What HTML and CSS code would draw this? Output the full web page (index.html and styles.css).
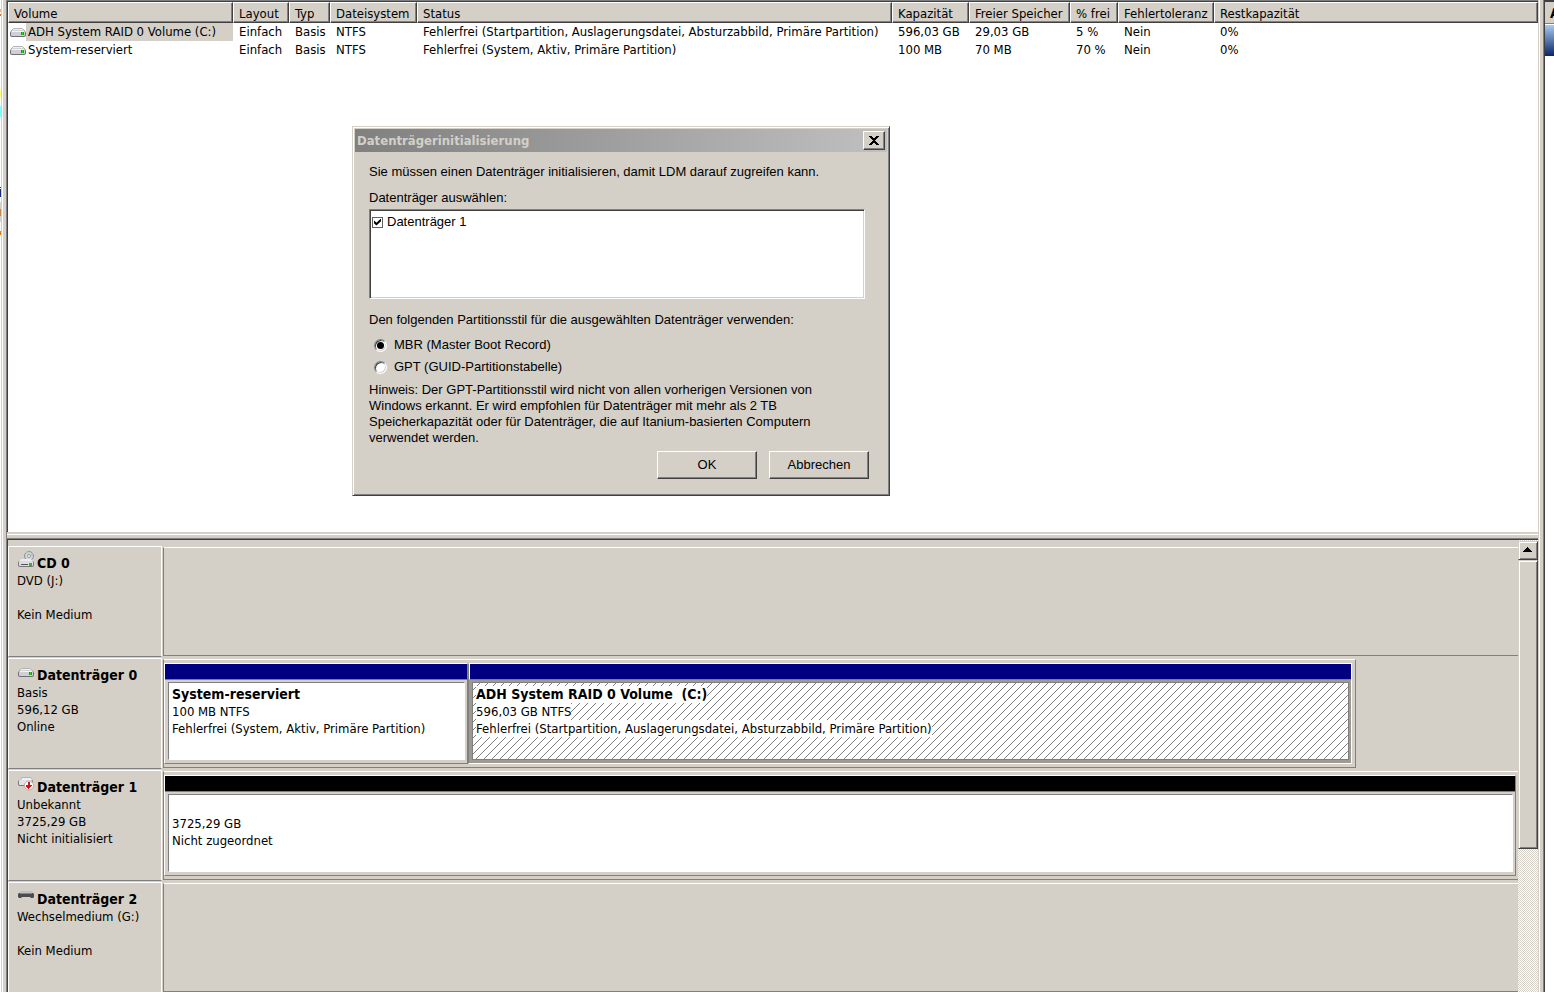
FILE: index.html
```html
<!DOCTYPE html>
<html lang="de">
<head>
  <meta charset="UTF-8">
  <meta name="viewport" content="width=device-width, initial-scale=1.0">
  <title>Datenträgerverwaltung</title>
  <link rel="stylesheet" href="styles.css">
</head>
<body>
  <!-- Symbole -->
  <svg class="symbols" width="0" height="0">
    <symbol id="icon-volume" viewBox="0 0 16 10">
      <path d="M3.500 1.500h9L15 4H1z" fill="#f0f0f2" stroke="#b4b4b8"/>
      <rect x="0" y="4" width="16" height="6" rx="2" fill="#6e6e74"/>
      <rect x="1" y="4" width="14" height="5" rx="1" fill="#cfcfd8"/>
      <path d="M2 4.500h12" stroke="#f4f4f8"/>
      <rect x="11" y="5" width="3" height="3" fill="#4a7a44"/>
      <rect x="12" y="5" width="1" height="3" fill="#35d51c"/>
    </symbol>
    <symbol id="icon-cd" viewBox="0 0 16 17">
      <circle cx="11" cy="5" r="4.500" fill="#d5d5dc" stroke="#8c8c94"/>
      <path d="M11 5L8 1.500A5 5 0 0 1 11 .5z" fill="#a8dcb0"/>
      <path d="M11 5l3.500-3A5 5 0 0 1 15 5z" fill="#d0b0dc"/>
      <circle cx="11" cy="5" r="1.500" fill="#fff" stroke="#999"/>
      <path d="M3 8h10l2 3H1z" fill="#ececf0"/>
      <rect x="0" y="10" width="16" height="6" rx="2" fill="#77777c"/>
      <rect x="1" y="10" width="14" height="5" rx="1" fill="#dcdce4"/>
      <path d="M3 13.500h7" stroke="#55555a"/>
      <rect x="11" y="12" width="3" height="3" fill="#35b51c"/>
    </symbol>
    <symbol id="icon-offline" viewBox="0 0 16 14">
      <path d="M4 .5h9L15 4H2z" fill="#f0f0f4" stroke="#b4b4b8"/>
      <rect x="0" y="3" width="15" height="6" rx="2" fill="#77777c"/>
      <rect x="1" y="3" width="13" height="5" rx="1" fill="#e2e2ea"/>
      <circle cx="11" cy="8.500" r="4.500" fill="#fff" stroke="#b8a0a0"/>
      <path d="M10 5h2v3h2v1h-1v1h-1v1h-1v1h-1v-1H9v-1H8V8h2z" fill="#d01414"/>
    </symbol>
    <symbol id="icon-removable" viewBox="0 0 16 10">
      <path d="M3 1h10l2 2H1z" fill="#c0c0c2"/>
      <path d="M1 3h14l1 1v3l-1 1h-2l-1-1H4L3 8H1L0 7V4z" fill="#4c4c50"/>
      <path d="M2 3.500h12" stroke="#8a8a8e"/>
    </symbol>
    <pattern id="hatch" width="8" height="8" patternUnits="userSpaceOnUse">
      <path d="M6 0h1v1H6zM5 1h1v1H5zM4 2h1v1H4zM3 3h1v1H3zM2 4h1v1H2zM1 5h1v1H1zM0 6h1v1H0zM7 7h1v1H7z" fill="#808080" shape-rendering="crispEdges"/>
    </pattern>
  </svg>

  <div class="console">
    <div class="tree-edge"></div>

    <main class="center">
      <section class="volumes">
        <table class="volume-table">
          <colgroup>
            <col class="col-volume">
            <col class="col-layout">
            <col class="col-type">
            <col class="col-fs">
            <col class="col-status">
            <col class="col-capacity">
            <col class="col-free">
            <col class="col-percent">
            <col class="col-fault">
            <col>
          </colgroup>
          <thead>
            <tr>
              <th>Volume</th>
              <th>Layout</th>
              <th>Typ</th>
              <th>Dateisystem</th>
              <th>Status</th>
              <th>Kapazität</th>
              <th>Freier Speicher</th>
              <th>% frei</th>
              <th>Fehlertoleranz</th>
              <th>Restkapazität</th>
            </tr>
          </thead>
          <tbody>
            <tr>
              <td class="name"><div class="name-cell"><svg class="icon" width="16" height="10"><use href="#icon-volume"/></svg><span class="selected">ADH System RAID 0 Volume (C:)</span></div></td>
              <td>Einfach</td>
              <td>Basis</td>
              <td>NTFS</td>
              <td>Fehlerfrei (Startpartition, Auslagerungsdatei, Absturzabbild, Primäre Partition)</td>
              <td>596,03 GB</td>
              <td>29,03 GB</td>
              <td>5 %</td>
              <td>Nein</td>
              <td>0%</td>
            </tr>
            <tr>
              <td class="name"><div class="name-cell"><svg class="icon" width="16" height="10"><use href="#icon-volume"/></svg><span>System-reserviert</span></div></td>
              <td>Einfach</td>
              <td>Basis</td>
              <td>NTFS</td>
              <td>Fehlerfrei (System, Aktiv, Primäre Partition)</td>
              <td>100 MB</td>
              <td>70 MB</td>
              <td>70 %</td>
              <td>Nein</td>
              <td>0%</td>
            </tr>
          </tbody>
        </table>
      </section>

      <div class="splitter"></div>

      <section class="disks">
        <div class="disk-list">
          <article class="disk">
            <div class="disk-label">
              <h2><svg class="icon" width="16" height="17"><use href="#icon-cd" width="16" height="17"/></svg>CD 0</h2>
              <p>DVD (J:)</p>
              <p>&nbsp;</p>
              <p>Kein Medium</p>
            </div>
            <div class="disk-pane"></div>
          </article>

          <article class="disk">
            <div class="disk-label">
              <h2><svg class="icon" width="16" height="17"><use href="#icon-volume" y="4" width="16" height="10"/></svg>Datenträger 0</h2>
              <p>Basis</p>
              <p>596,12 GB</p>
              <p>Online</p>
            </div>
            <div class="disk-pane framed" style="width: 79%">
              <div class="partition" style="width: 25.6%">
                <div class="bar primary"></div>
                <div class="body">
                  <h3>System-reserviert</h3>
                  <p>100 MB NTFS</p>
                  <p>Fehlerfrei (System, Aktiv, Primäre Partition)</p>
                </div>
              </div>
              <div class="partition active">
                <div class="bar primary"></div>
                <div class="body">
                  <svg class="hatch" width="100%" height="100%"><rect width="100%" height="100%" fill="url(#hatch)"/></svg>
                  <h3><span>ADH System RAID 0 Volume&nbsp; (C:)</span></h3>
                  <p><span>596,03 GB NTFS</span></p>
                  <p><span>Fehlerfrei (Startpartition, Auslagerungsdatei, Absturzabbild, Primäre Partition)</span></p>
                </div>
              </div>
            </div>
          </article>

          <article class="disk">
            <div class="disk-label">
              <h2><svg class="icon" width="16" height="17"><use href="#icon-offline" y="2" width="16" height="14"/></svg>Datenträger 1</h2>
              <p>Unbekannt</p>
              <p>3725,29 GB</p>
              <p>Nicht initialisiert</p>
            </div>
            <div class="disk-pane full">
              <div class="partition">
                <div class="bar unallocated"></div>
                <div class="body">
                  <p>&nbsp;</p>
                  <p>3725,29 GB</p>
                  <p>Nicht zugeordnet</p>
                </div>
              </div>
            </div>
          </article>

          <article class="disk">
            <div class="disk-label">
              <h2><svg class="icon" width="16" height="17"><use href="#icon-removable" y="3" width="16" height="10"/></svg>Datenträger 2</h2>
              <p>Wechselmedium (G:)</p>
              <p>&nbsp;</p>
              <p>Kein Medium</p>
            </div>
            <div class="disk-pane"></div>
          </article>
        </div>

        <div class="scrollbar">
          <button class="scroll-up" type="button" aria-label="Nach oben"><svg width="9" height="5" shape-rendering="crispEdges"><path d="M4 0h1v1h1v1h1v1h1v1h1v1H0V4h1V3h1V2h1V1h1z"/></svg></button>
          <div class="scroll-thumb"></div>
        </div>
      </section>
    </main>

    <aside class="actions">
      <h2 class="actions-title">A</h2>
      <div class="actions-group"></div>
    </aside>
  </div>

  <form class="dialog" role="dialog" aria-labelledby="dialog-title">
    <header class="titlebar">
      <h1 id="dialog-title">Datenträgerinitialisierung</h1>
      <button class="close" type="button" aria-label="Schließen"><svg width="10" height="9" shape-rendering="crispEdges"><path d="M0 0h3v1h1v1h2V1h1V0h3v1H9v1H8v1H7v1H6v1h1v1h1v1h1v1h1v1H7V8H6V7H4v1H3v1H0V8h1V7h1V6h1V5h1V4H3V3H2V2H1V1H0z"/></svg></button>
    </header>
    <div class="dialog-content">
      <p>Sie müssen einen Datenträger initialisieren, damit LDM darauf zugreifen kann.</p>
      <p class="list-title">Datenträger auswählen:</p>
      <div class="listbox">
        <label><input type="checkbox" checked>Datenträger 1</label>
      </div>
      <fieldset>
        <legend>Den folgenden Partitionsstil für die ausgewählten Datenträger verwenden:</legend>
        <label><input type="radio" name="style" checked>MBR (Master Boot Record)</label>
        <label><input type="radio" name="style">GPT (GUID-Partitionstabelle)</label>
      </fieldset>
      <p class="hint">Hinweis: Der GPT-Partitionsstil wird nicht von allen vorherigen Versionen von Windows erkannt. Er wird empfohlen für Datenträger mit mehr als 2 TB Speicherkapazität oder für Datenträger, die auf Itanium-basierten Computern verwendet werden.</p>
    </div>
    <div class="buttons">
      <button class="push" type="button">OK</button>
      <button class="push" type="button">Abbrechen</button>
    </div>
  </form>
</body>
</html>
```

FILE: styles.css
```css
* {
  box-sizing: border-box;
}
body {
  margin: 0;
  height: 100vh;
  overflow: hidden;
  background: #d4d0c8;
  color: #000;
  font-family: Tahoma, "DejaVu Sans Condensed", "DejaVu Sans", sans-serif;
  font-size: 13px;
  line-height: 17px;
}
h1, h2, h3, p {
  margin: 0;
  font-size: 13px;
}
h2, h3 {
  font-size: 14px;
}
button {
  padding: 0;
  font: inherit;
  color: #000;
  background: #d4d0c8;
}
.symbols {
  position: absolute;
}
.icon {
  flex: none;
}

.console {
  display: flex;
  height: 100%;
}

/* Rand der Konsolenstruktur links */
.tree-edge {
  width: 3px;
  border-right: 1px solid #fff;
  background:
    linear-gradient(#fff 9px, #f0b080 9px 12px, #fff 12px 14px, #e07020 14px 16px, #fff 16px 89px, #ffff80 89px 97px, #fff 97px 106px, #80ffff 106px 117px, #fff 117px 187px, #102a80 187px 188px, #fff 188px 189px, #102a80 189px 197px, #fff 197px 202px, #d4d0c8 202px 209px, #d08040 209px 216px, #d4d0c8 216px 222px, #fff 222px 231px, #e07810 231px 235px, #fff 235px) 0 0 / 1px 100% no-repeat,
    #d4d0c8;
}
.center {
  flex: 1;
  display: flex;
  flex-direction: column;
  min-width: 0;
  margin-left: 3px;
  border: solid #808080;
  border-width: 1px 0 0 1px;
}

/* Volumeliste */
.volumes {
  flex: 531 0 0;
  min-height: 0;
  background: #fff;
  border: solid #404040;
  border-width: 1px 0 0 1px;
}
.volume-table {
  width: 100%;
  table-layout: fixed;
  border-collapse: separate;
  border-spacing: 0;
}
.col-volume { width: 225px; }
.col-layout { width: 56px; }
.col-type { width: 41px; }
.col-fs { width: 87px; }
.col-status { width: 475px; }
.col-capacity { width: 77px; }
.col-free { width: 101px; }
.col-percent { width: 48px; }
.col-fault { width: 96px; }
.volume-table th {
  height: 21px;
  padding: 1px 0 0 5px;
  background: #d4d0c8;
  border: 1px solid;
  border-color: #fff #404040 #404040 #fff;
  box-shadow: inset -1px -1px #808080;
  font-weight: normal;
  text-align: left;
  white-space: nowrap;
}
.volume-table td {
  height: 18px;
  padding: 0 0 0 6px;
  line-height: 18px;
  white-space: nowrap;
}
.volume-table .name {
  padding: 0 0 0 2px;
}
.name-cell {
  display: flex;
  align-items: center;
}
.name-cell span {
  flex: 1;
  padding-left: 2px;
}
.name-cell .selected {
  background: #d4d0c8;
}

.splitter {
  height: 8px;
  background: linear-gradient(#d4d0c8 2px, #fff 2px 3px, #d4d0c8 3px 6px, #808080 6px 7px, #404040 7px);
}

/* Grafische Ansicht */
.disks {
  flex: 452 0 0;
  display: flex;
  min-height: 0;
  overflow: hidden;
  border-left: 1px solid #404040;
}
.disk-list {
  flex: 1;
  min-width: 0;
  padding-top: 6px;
}
.disk {
  display: flex;
  height: 112px;
  border-bottom: 1px solid #d4d0c8;
}
.disk-label {
  flex: none;
  width: 154px;
  padding: 8px 0 0 8px;
  border: 1px solid #fff;
  border-bottom-color: #808080;
  white-space: nowrap;
}
.disk-label h2 {
  display: flex;
  gap: 3px;
  height: 17px;
}
.disk-label .icon {
  margin: -4px 0 0 1px;
}
.disk-pane {
  flex: 1;
  display: flex;
  min-width: 0;
  margin: 1px 0 1px 1px;
  border: solid #fff;
  border-width: 1px 0 1px 1px;
  border-left-color: #808080;
  border-bottom-color: #808080;
}
.disk-pane.framed {
  flex: none;
  padding: 3px 3px 3px 0;
  border-right: 1px solid #808080;
}
.disk-pane.full {
  padding: 3px 2px 3px 0;
}
.partition {
  flex: none;
  display: flex;
  flex-direction: column;
  border: 1px solid;
  border-color: #fff #808080 #808080 #fff;
}
.partition:last-child {
  flex: 1;
  min-width: 0;
}
.partition.active {
  background: #9e9a92;
  border-color: #fff #fff #fff #808080;
}
.bar {
  height: 16px;
  border-bottom: 1px solid #808080;
}
.bar.primary {
  background: #000080;
}
.bar.unallocated {
  background: #000;
}
.body {
  position: relative;
  flex: 1;
  margin: 2px 2px 3px 3px;
  padding: 3px;
  overflow: hidden;
  background: #fff;
  border: 1px solid;
  border-color: #808080 #fff #fff #808080;
  white-space: nowrap;
}
.active .body {
  border-color: #808080;
}
.active .bar {
  border-left: 1px solid #fff;
}
.active span {
  position: relative;
  display: inline-block;
  background: #fff;
}
.hatch {
  position: absolute;
  inset: 0;
}

/* Bildlaufleiste */
.scrollbar {
  width: 20px;
  padding-top: 1px;
  background: repeating-conic-gradient(#fff 0 25%, #d4d0c8 0 50%) 0 0 / 2px 2px;
}
.scroll-up,
.scroll-thumb {
  display: block;
  width: 20px;
  background: #d4d0c8;
  border: 1px solid;
  border-color: #d4d0c8 #404040 #404040 #d4d0c8;
  box-shadow: inset 1px 1px #fff, inset -1px -1px #808080;
}
.scroll-up {
  height: 19px;
  padding-bottom: 2px;
}
.scroll-up svg {
  display: block;
  margin: 0 4px;
}
.scroll-thumb {
  height: 64%;
}

/* Aktionsbereich rechts */
.actions {
  width: 16px;
  overflow: hidden;
  background: #fff;
  border-left: 1px solid #d4d0c8;
  box-shadow: inset 1px 0 #fff, inset 4px 0 #d4d0c8, inset 5px 0 #808080, inset 6px 0 #404040;
  padding-left: 6px;
}
.actions-title {
  height: 24px;
  padding: 3px 0 0 5px;
  background: #d4d0c8;
  border-top: 2px solid #404040;
  border-bottom: 1px solid #808080;
}
.actions-group {
  height: 31px;
  margin-top: 1px;
  background: linear-gradient(#a6caf0, #0a246a);
}

/* Dialogfeld */
.dialog {
  position: absolute;
  left: 352px;
  top: 126px;
  width: 538px;
  padding: 2px 2px 16px;
  background: #d4d0c8;
  border: 1px solid;
  border-color: #d4d0c8 #404040 #404040 #d4d0c8;
  box-shadow: inset 1px 1px #fff, inset -1px -1px #808080;
  font-family: "Liberation Sans", Arial, sans-serif;
  line-height: 16px;
}
.titlebar {
  display: flex;
  justify-content: space-between;
  align-items: center;
  height: 23px;
  padding: 0 2px;
  background: linear-gradient(90deg, #808080, #c0c0c0);
}
.titlebar h1 {
  color: #d4d0c8;
  font-family: Tahoma, "DejaVu Sans Condensed", "DejaVu Sans", sans-serif;
}
.close,
.push {
  border: 1px solid;
  border-color: #fff #404040 #404040 #fff;
  box-shadow: inset -1px -1px #808080;
}
.close {
  display: flex;
  align-items: center;
  justify-content: center;
  width: 22px;
  height: 19px;
}
.dialog-content {
  padding: 12px 22px 0 14px;
}
.dialog .list-title {
  margin-top: 10px;
}
.listbox {
  height: 90px;
  margin-top: 3px;
  padding: 4px 2px;
  background: #fff;
  border: 1px solid;
  border-color: #808080 #fff #fff #808080;
  box-shadow: inset 1px 1px #404040, inset -1px -1px #d4d0c8;
}
.listbox label {
  display: flex;
  align-items: center;
  gap: 4px;
}
input {
  flex: none;
  display: grid;
  place-items: center;
  appearance: none;
  margin: 0;
  background: #fff;
}
input[type="checkbox"] {
  width: 11px;
  height: 11px;
  border: 1px solid #606060;
}
input[type="checkbox"]:checked::before {
  content: "";
  width: 7px;
  height: 7px;
  background: #000;
  clip-path: polygon(0 30%, 35% 62%, 100% 0, 100% 38%, 35% 100%, 0 68%);
}
input[type="radio"] {
  width: 13px;
  height: 13px;
  border: 1px solid;
  border-color: #808080 #fff #fff #808080;
  border-radius: 50%;
  box-shadow: inset 1px 1px #404040, inset -1px -1px #d4d0c8;
}
input[type="radio"]:checked::before {
  content: "";
  width: 7px;
  height: 7px;
  background: #000;
  border-radius: 50%;
}
fieldset {
  margin: 13px 0 0;
  padding: 0;
  border: 0;
}
legend {
  margin-bottom: 6px;
  padding: 0;
}
fieldset label {
  display: flex;
  align-items: center;
  gap: 7px;
  height: 22px;
  padding-left: 5px;
}
.hint {
  margin-top: 4px;
  padding-right: 20px;
}
.buttons {
  display: flex;
  justify-content: flex-end;
  gap: 12px;
  padding: 5px 18px 0 0;
}
.push {
  width: 100px;
  height: 28px;
}
```
